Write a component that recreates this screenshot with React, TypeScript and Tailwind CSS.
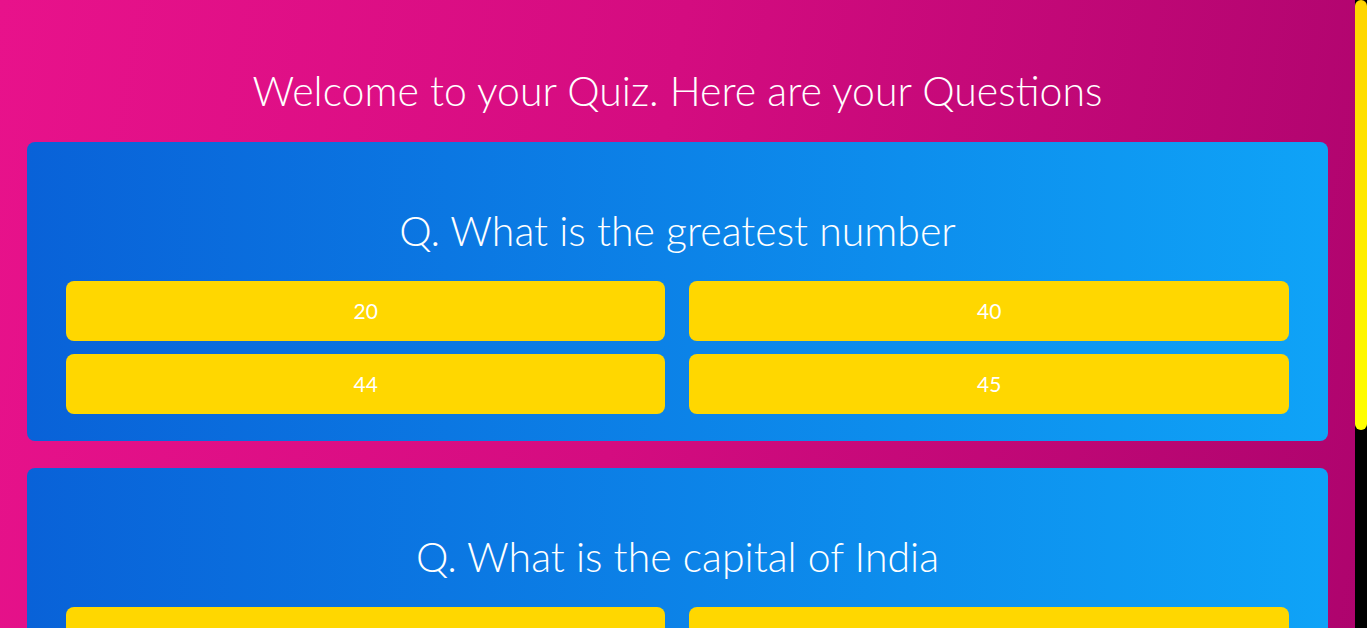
import React from "react";

const questions = [
  { q: "Q. What is the greatest number", a: ["20", "40", "44", "45"] },
  { q: "Q. What is the capital of India", a: ["Mumbai", "Delhi", "Kolkata", "Chennai"] },
];

export default function App() {
  return (
    <div
      className="flex min-h-screen bg-[linear-gradient(100deg,#e8128b_0%,#d40c80_45%,#ab036c_100%)]"
      style={{ fontFamily: "Lato, 'Open Sans', sans-serif" }}
    >
      <div className="flex-1 flex flex-col items-center pt-[66px] pb-[150px]">
        <h1 className="text-[41px] leading-[50px] font-light text-white mb-[26px]">
          Welcome to your Quiz. Here are your Questions
        </h1>
        <div className="w-[96%] flex flex-col gap-[27px]">
          {questions.map((item) => (
            <div
              key={item.q}
              className="rounded-lg bg-[linear-gradient(to_right,#0962d8,#0fa3f7)] px-[39px] pt-[64px] pb-[27px]"
            >
              <h2 className="text-center text-[41px] leading-[50px] font-light text-white mb-[25px]">
                {item.q}
              </h2>
              <div className="grid grid-cols-2 gap-x-[24px] gap-y-[13px]">
                {item.a.map((ans) => (
                  <button
                    key={ans}
                    className="h-[60px] rounded-lg bg-[#ffd700] text-white text-[21px]"
                  >
                    {ans}
                  </button>
                ))}
              </div>
            </div>
          ))}
        </div>
      </div>
      <div className="w-[12px] shrink-0 bg-black">
        <div className="h-[430px] rounded-full bg-[linear-gradient(to_bottom,#ffd400,#ffff00)]" />
      </div>
    </div>
  );
}
